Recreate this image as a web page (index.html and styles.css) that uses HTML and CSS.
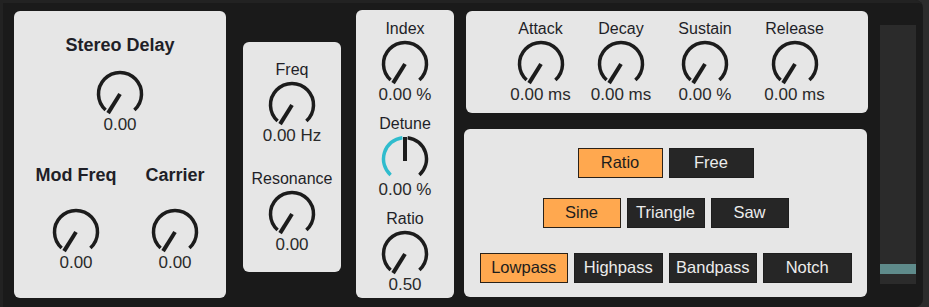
FILE: index.html
```html
<!DOCTYPE HTML>
<html>
<head>
<meta http-equiv="Content-Type" content="text/html; charset=utf-8">
<title>FM Synth</title>
<link rel="stylesheet" href="styles.css">
</head>
<body>
<div class="device">

	<section class="panel panel-fx">
		<div class="ctl">
			<p class="label-big">Stereo Delay</p>
			<svg class="dial dial-first" viewBox="0 0 48 48"><path class="arc" d="M9.61 39.98 A21.5 21.5 0 1 1 38.39 39.98"/><line class="needle" x1="24" y1="24" x2="12.1" y2="43.1"/></svg>
			<p class="value">0.00</p>
		</div>
		<div class="pair">
			<div class="ctl">
				<p class="label-big">Mod Freq</p>
				<svg class="dial dial-pair" viewBox="0 0 48 48"><path class="arc" d="M9.61 39.98 A21.5 21.5 0 1 1 38.39 39.98"/><line class="needle" x1="24" y1="24" x2="12.1" y2="43.1"/></svg>
				<p class="value">0.00</p>
			</div>
			<div class="ctl">
				<p class="label-big">Carrier</p>
				<svg class="dial dial-pair" viewBox="0 0 48 48"><path class="arc" d="M9.61 39.98 A21.5 21.5 0 1 1 38.39 39.98"/><line class="needle" x1="24" y1="24" x2="12.1" y2="43.1"/></svg>
				<p class="value">0.00</p>
			</div>
		</div>
	</section>

	<section class="panel panel-filter">
		<div class="ctl">
			<p class="label">Freq</p>
			<svg class="dial" viewBox="0 0 48 48"><path class="arc" d="M9.61 39.98 A21.5 21.5 0 1 1 38.39 39.98"/><line class="needle" x1="24" y1="24" x2="12.1" y2="43.1"/></svg>
			<p class="value">0.00 Hz</p>
		</div>
		<div class="ctl ctl-next">
			<p class="label">Resonance</p>
			<svg class="dial" viewBox="0 0 48 48"><path class="arc" d="M9.61 39.98 A21.5 21.5 0 1 1 38.39 39.98"/><line class="needle" x1="24" y1="24" x2="12.1" y2="43.1"/></svg>
			<p class="value">0.00</p>
		</div>
	</section>

	<section class="panel panel-osc">
		<div class="ctl">
			<p class="label">Index</p>
			<svg class="dial" viewBox="0 0 48 48"><path class="arc" d="M9.61 39.98 A21.5 21.5 0 1 1 38.39 39.98"/><line class="needle" x1="24" y1="24" x2="12.1" y2="43.1"/></svg>
			<p class="value">0.00 %</p>
		</div>
		<div class="ctl">
			<p class="label">Detune</p>
			<svg class="dial" viewBox="0 0 48 48"><path class="arc arc-on" d="M9.61 39.98 A21.5 21.5 0 0 1 21.38 2.65"/><path class="arc" d="M26.62 2.65 A21.5 21.5 0 0 1 38.39 39.98"/><line class="needle" x1="24" y1="2" x2="24" y2="26"/></svg>
			<p class="value">0.00 %</p>
		</div>
		<div class="ctl">
			<p class="label">Ratio</p>
			<svg class="dial" viewBox="0 0 48 48"><path class="arc" d="M9.61 39.98 A21.5 21.5 0 1 1 38.39 39.98"/><line class="needle" x1="24" y1="24" x2="12.1" y2="43.1"/></svg>
			<p class="value">0.50</p>
		</div>
	</section>

	<div class="column">
		<section class="panel panel-env">
			<div class="ctl">
				<p class="label">Attack</p>
				<svg class="dial" viewBox="0 0 48 48"><path class="arc" d="M9.61 39.98 A21.5 21.5 0 1 1 38.39 39.98"/><line class="needle" x1="24" y1="24" x2="12.1" y2="43.1"/></svg>
				<p class="value">0.00 ms</p>
			</div>
			<div class="ctl">
				<p class="label">Decay</p>
				<svg class="dial" viewBox="0 0 48 48"><path class="arc" d="M9.61 39.98 A21.5 21.5 0 1 1 38.39 39.98"/><line class="needle" x1="24" y1="24" x2="12.1" y2="43.1"/></svg>
				<p class="value">0.00 ms</p>
			</div>
			<div class="ctl">
				<p class="label">Sustain</p>
				<svg class="dial" viewBox="0 0 48 48"><path class="arc" d="M9.61 39.98 A21.5 21.5 0 1 1 38.39 39.98"/><line class="needle" x1="24" y1="24" x2="12.1" y2="43.1"/></svg>
				<p class="value">0.00 %</p>
			</div>
			<div class="ctl">
				<p class="label">Release</p>
				<svg class="dial" viewBox="0 0 48 48"><path class="arc" d="M9.61 39.98 A21.5 21.5 0 1 1 38.39 39.98"/><line class="needle" x1="24" y1="24" x2="12.1" y2="43.1"/></svg>
				<p class="value">0.00 ms</p>
			</div>
		</section>

		<section class="panel panel-tabs">
			<div class="tabs tabs-mode">
				<span class="tab on">Ratio</span>
				<span class="tab">Free</span>
			</div>
			<div class="tabs tabs-wave">
				<span class="tab on">Sine</span>
				<span class="tab">Triangle</span>
				<span class="tab">Saw</span>
			</div>
			<div class="tabs tabs-type">
				<span class="tab on">Lowpass</span>
				<span class="tab">Highpass</span>
				<span class="tab">Bandpass</span>
				<span class="tab">Notch</span>
			</div>
		</section>
	</div>

	<div class="meter"><div class="meter-level"></div></div>

</div>
</body>
</html>
```

FILE: styles.css
```css
body { margin:0; background:#2c2c2c; font-family:"Liberation Sans", Arial, sans-serif; color:#1f1f28; }
p { margin:0; }
.device { width:923px; height:307px; box-sizing:border-box; padding-left:14px; background:#1a1a1a; border-radius:0 8px 8px 0; box-shadow:inset 3px 3px 0 #222; display:flex; align-items:flex-start; }

.panel { background:#e6e6e6; border-radius:6px; box-sizing:border-box; }
.panel-fx { width:212px; height:287px; margin-top:11px; padding-top:24px; }
.panel-filter { width:98px; height:230px; margin:42px 0 0 17px; padding-top:19px; }
.panel-osc { width:98px; height:288px; margin:10px 0 0 15px; padding-top:10px; display:flex; flex-direction:column; gap:11px; }
.column { width:404px; margin:0 0 0 10px; display:flex; flex-direction:column; }
.panel-env { width:402px; height:102px; margin:11px 0 0 2px; padding:9px 0 0 34px; display:grid; grid-template-columns:81px 80px 88px 91px; }
.panel-tabs { width:403px; height:168px; margin-top:16px; padding-top:19px; display:flex; flex-direction:column; align-items:center; }

.ctl { display:flex; flex-direction:column; align-items:center; }
.ctl-next { margin-top:25px; }
.pair { display:grid; grid-template-columns:92px 92px; column-gap:7px; padding-left:16px; margin-top:31px; }

.label-big { font-size:18px; line-height:20px; font-weight:bold; white-space:nowrap; }
.label { font-size:16px; line-height:18px; white-space:nowrap; }
.value { font-size:17px; line-height:18px; color:#2a2a2a; margin-top:-2px; white-space:nowrap; }

.dial { width:48px; height:48px; display:block; margin-top:2px; }
.dial-first { margin-top:15px; }
.dial-pair { margin-top:23px; }
.arc { fill:none; stroke:#1c1c1c; stroke-width:3.5; }
.arc-on { stroke:#2fbccd; }
.needle { stroke:#1c1c1c; stroke-width:4; }

.tabs { display:flex; gap:6px; }
.tabs-wave { margin-top:20px; }
.tabs-type { margin-top:25px; }
.tab { height:30px; box-sizing:border-box; border:1.5px solid #1e1e1e; background:#262626; color:#ececec; font-size:16.5px; line-height:27px; text-align:center; }
.tab.on { background:#ffa84f; color:#1d1d1d; border-color:#2a2118; }
.tabs-mode .tab { width:85px; }
.tabs-wave .tab { width:78px; }
.tabs-type .tab { width:88.5px; }

.meter { width:36px; height:259px; margin:25px 0 0 12px; background:#2b2b2b; display:flex; flex-direction:column; justify-content:flex-end; }
.meter-level { height:10px; margin-bottom:10px; background:#5f8b8b; }
```
